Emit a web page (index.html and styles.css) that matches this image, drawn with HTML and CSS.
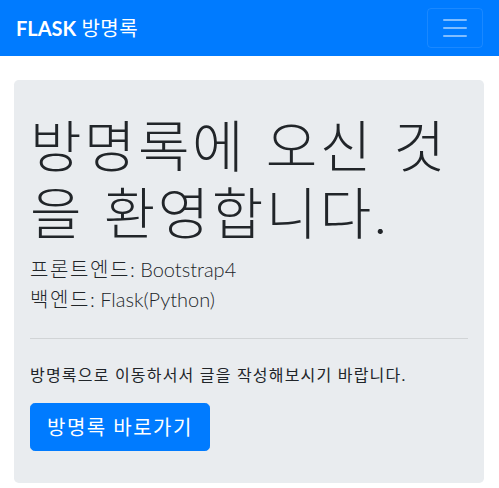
FILE: index.html
```html
<!DOCTYPE html>
<html lang="ko">
<head>
<meta charset="utf-8">
<title>FLASK 방명록</title>
<link rel="stylesheet" href="styles.css">
</head>
<body>
<nav class="navbar">
  <a class="brand" href="#"><b>FLASK</b> <span class="ko">방명록</span></a>
  <button class="toggler" type="button" aria-label="Toggle navigation">
    <svg width="30" height="30" viewBox="0 0 30 30"><path d="M4 7h22M4 15h22M4 23h22" stroke="rgba(255,255,255,0.5)" stroke-width="2" stroke-linecap="round" stroke-miterlimit="10"/></svg>
  </button>
</nav>
<div class="container">
  <div class="jumbotron">
    <h1 class="display">방명록에 오신 것을 환영합니다.</h1>
    <p class="lead"><span class="ko">프론트엔드</span>: Bootstrap4<br><span class="ko">백엔드</span>: Flask(Python)</p>
    <hr class="divider">
    <p class="text">방명록으로 이동하서서 글을 작성해보시기 바랍니다.</p>
    <a class="btn" href="#">방명록 바로가기</a>
  </div>
</div>
</body>
</html>
```

FILE: styles.css
```css
* { box-sizing: border-box; }
html, body { margin: 0; padding: 0; }
body {
  font-family: "Lato", "Noto Sans CJK KR", sans-serif;
  font-size: 16px;
  line-height: 1.5;
  color: #212529;
  background: #fff;
}
.ko { letter-spacing: 1.5px; }
.navbar {
  height: 56px;
  background: #007bff;
  display: flex;
  align-items: center;
  justify-content: space-between;
  padding: 8px 16px;
}
.brand {
  color: #fff;
  text-decoration: none;
  font-size: 20px;
  line-height: 30px;
  font-weight: 400;
}
.brand b { font-weight: 700; }
.brand .ko { letter-spacing: 0.5px; }
.toggler {
  width: 56px;
  height: 40px;
  padding: 4px 12px;
  background: transparent;
  border: 1px solid rgba(255,255,255,0.1);
  border-radius: 4px;
  display: flex;
  align-items: center;
  justify-content: center;
}
.toggler svg { display: block; }
.container {
  padding: 24px 15px 0 14px;
}
.jumbotron {
  background: #e9ecef;
  border-radius: 4.8px;
  padding: 32px 16px;
}
.display {
  font-size: 56px;
  font-weight: 300;
  line-height: 1.2;
  margin: 0 0 8px;
  letter-spacing: 2.5px;
  word-spacing: 2px;
}
.lead {
  font-size: 20px;
  font-weight: 300;
  line-height: 30px;
  margin: 0 0 16px;
}
.lead .ko { letter-spacing: 1.6px; font-weight: 300; }
.divider {
  margin: 24px 0;
  border: 0;
  border-top: 1px solid rgba(0,0,0,0.1);
  height: 0;
}
.text {
  margin: 0 0 16px;
  letter-spacing: 1.2px;
}
.btn {
  display: inline-block;
  background: #007bff;
  color: #fff;
  text-decoration: none;
  font-size: 20px;
  line-height: 30px;
  padding: 8px 16px;
  border: 1px solid #007bff;
  border-radius: 4.8px;
  letter-spacing: 1.5px;
}
```
